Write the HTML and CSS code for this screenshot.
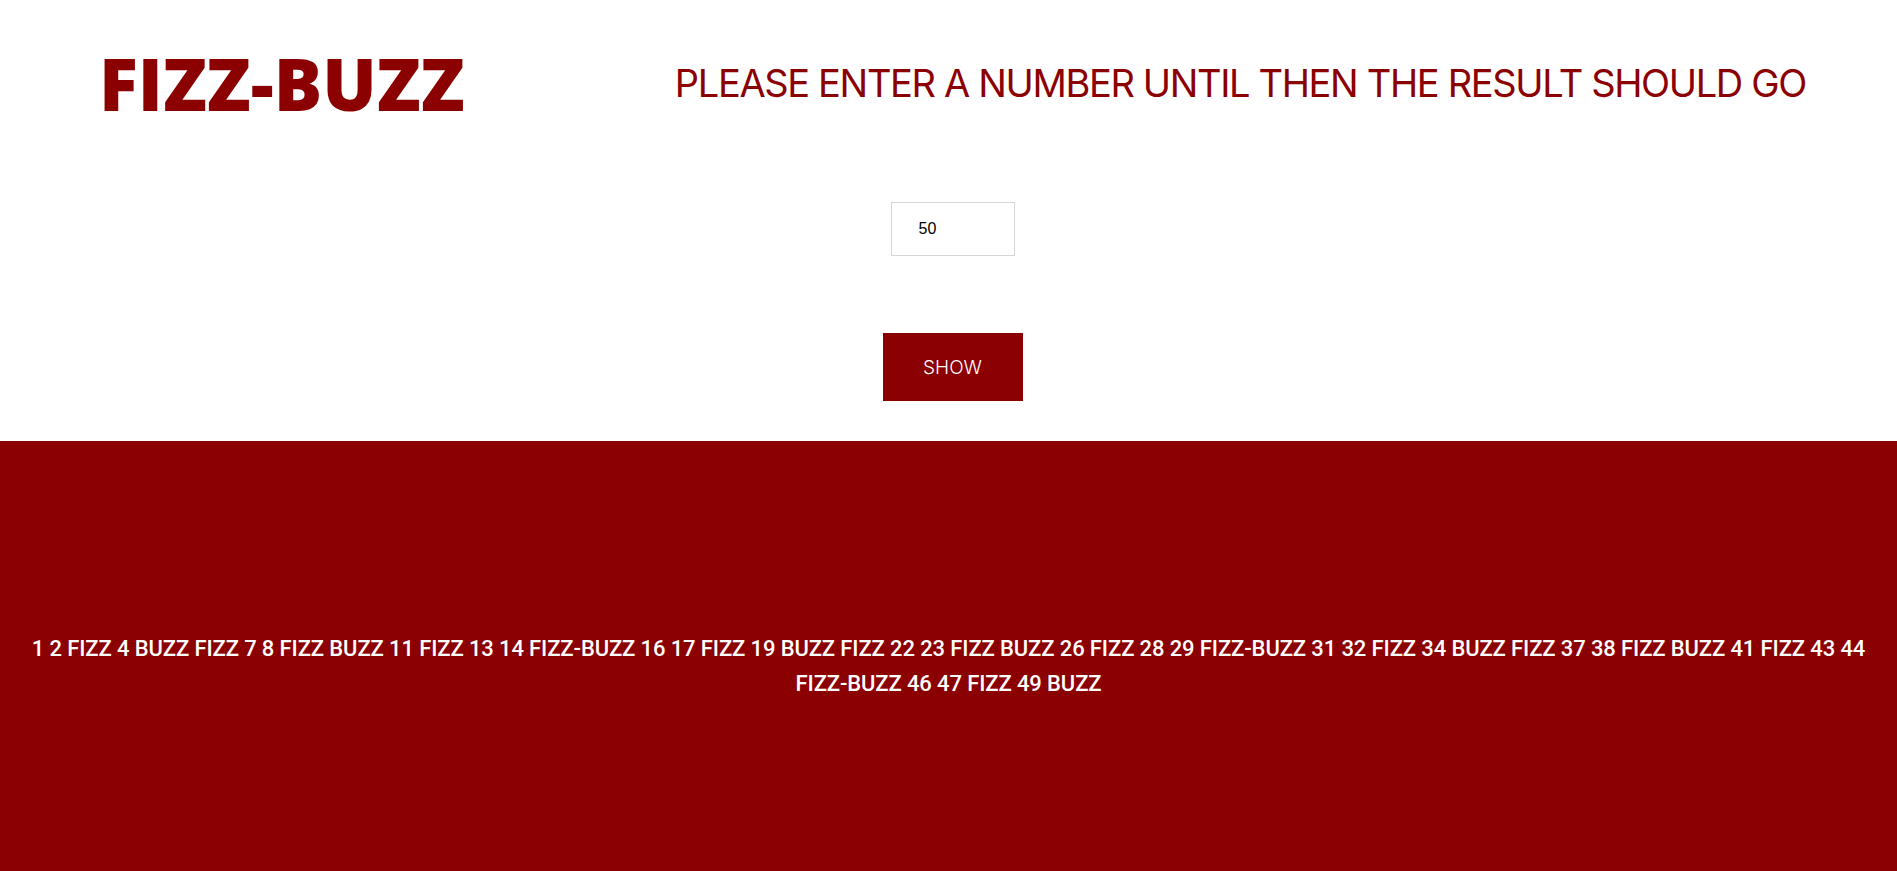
FILE: index.html
```html
<!DOCTYPE html>
<html lang="en">
<head>
<meta charset="utf-8">
<title>Fizz-Buzz</title>
<link rel="stylesheet" href="styles.css">
</head>
<body>
<header class="header">
  <h1 class="title">FIZZ-BUZZ</h1>
  <h2 class="subtitle">PLEASE ENTER A NUMBER UNTIL THEN THE RESULT SHOULD GO</h2>
</header>
<main class="form">
  <input class="number" type="number" value="50">
  <button class="show">SHOW</button>
</main>
<section class="result">
  <p class="result-text">1 2 FIZZ 4 BUZZ FIZZ 7 8 FIZZ BUZZ 11 FIZZ 13 14 FIZZ-BUZZ 16 17 FIZZ 19 BUZZ FIZZ 22 23 FIZZ BUZZ 26 FIZZ 28 29 FIZZ-BUZZ 31 32 FIZZ 34 BUZZ FIZZ 37 38 FIZZ BUZZ 41 FIZZ 43 44 FIZZ-BUZZ 46 47 FIZZ 49 BUZZ</p>
</section>
</body>
</html>
```
FILE: styles.css
```css
html, body {
  margin: 0;
  padding: 0;
  height: 100%;
}
body {
  display: flex;
  flex-direction: column;
  font-family: "Open Sans", "Liberation Sans", sans-serif;
  background: #fff;
}
.header {
  height: 166px;
  display: flex;
  justify-content: space-between;
  align-items: center;
  padding: 0 91px 0 99px;
}
.title {
  margin: 0;
  font-family: "Open Sans", sans-serif;
  font-weight: 800;
  font-size: 72px;
  color: #8b0000;
  line-height: 1;
}
.subtitle {
  margin: 0;
  font-family: "Inter", sans-serif;
  font-weight: 400;
  font-size: 38px;
  letter-spacing: -1.35px;
  color: #8b0000;
  line-height: 1;
}
.form {
  display: flex;
  flex-direction: column;
  align-items: center;
  padding: 36px 0 40px 8px;
  gap: 77px;
}
.number {
  box-sizing: border-box;
  width: 124px;
  height: 54px;
  border: 1px solid #d6d6d6;
  padding: 0 0 0 27px;
  font-family: "Liberation Sans", Arial, sans-serif;
  font-size: 16px;
  color: #000;
  outline: none;
  -moz-appearance: textfield;
}
.number::-webkit-inner-spin-button,
.number::-webkit-outer-spin-button {
  -webkit-appearance: none;
  margin: 0;
}
.show {
  width: 140px;
  height: 68px;
  border: none;
  background: #8b0000;
  color: #fff;
  font-family: "Inter", sans-serif;
  font-weight: 300;
  font-size: 19px;
  cursor: pointer;
}
.result {
  flex: 1;
  background: #8b0000;
  display: flex;
  align-items: center;
  justify-content: center;
  padding: 20px 20px 0;
}
.result-text {
  margin: 0;
  text-align: center;
  color: #fff;
  font-family: "Roboto", sans-serif;
  font-weight: 500;
  font-size: 22px;
  letter-spacing: -0.12px;
  line-height: 35px;
}
```
